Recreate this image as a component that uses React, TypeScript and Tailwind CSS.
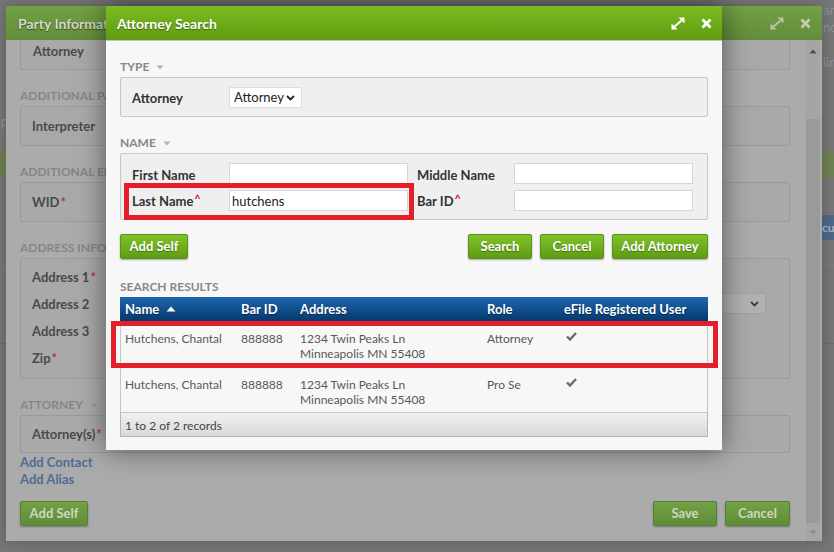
import React from "react";

const ExpandIcon = ({ color }: { color: string }) => (
  <svg width="14" height="13" viewBox="0 0 14 13">
    <path d="M3.5 9.5L10.5 3.5" stroke={color} strokeWidth="2" />
    <path d="M7.5 0.5H13.5V6.5Z" fill={color} />
    <path d="M0.5 6.5V12.5H6.5Z" fill={color} />
  </svg>
);

const CloseIcon = ({ color }: { color: string }) => (
  <svg width="11" height="11" viewBox="0 0 11 11">
    <path d="M1.5 1.5L9.5 9.5M9.5 1.5L1.5 9.5" stroke={color} strokeWidth="2.8" />
  </svg>
);

const DownTri = ({ color }: { color: string }) => (
  <svg width="8" height="5" viewBox="0 0 8 5">
    <path d="M0.5 0.5H7.5L4 4.5Z" fill={color} />
  </svg>
);

const Chevron = ({ color }: { color: string }) => (
  <svg width="9" height="6" viewBox="0 0 9 6">
    <path d="M1 1L4.5 4.5L8 1" stroke={color} strokeWidth="1.8" fill="none" />
  </svg>
);

const Check = () => (
  <svg width="11" height="9" viewBox="0 0 11 9">
    <path d="M1 4.5L4 7.5L10 1" stroke="#6a6a6a" strokeWidth="2.4" fill="none" />
  </svg>
);

const GreenBtn = ({ children, w }: { children: React.ReactNode; w: string }) => (
  <button
    className={`${w} h-[25px] rounded-[2px] border border-[#5a9317] bg-[linear-gradient(to_bottom,#80c228,#5e9c14)] text-white font-bold text-[13px] leading-none [text-shadow:0_1px_1px_rgba(0,0,0,0.35)] shadow-[0_1px_2px_rgba(0,0,0,0.35)]`}
  >
    {children}
  </button>
);

const DimBtn = ({ children, w }: { children: React.ReactNode; w: string }) => (
  <button
    className={`${w} h-[25px] rounded-[2px] border border-[#5a7f37] bg-[linear-gradient(to_bottom,#72a146,#5f8d38)] text-[#cdd6c2] font-bold text-[13px] leading-none shadow-[0_1px_2px_rgba(0,0,0,0.3)]`}
  >
    {children}
  </button>
);

const Caret = () => (
  <span className="text-[#e0102a] text-[11px] font-bold relative top-[-3px] ml-[1px]">^</span>
);

const DimStar = () => <span className="text-[#a53d48] ml-[1px]">*</span>;

function PageBehind() {
  return (
    <div className="w-full h-full flex flex-col bg-[#777777]">
      <div className="h-[145px] flex justify-between items-start">
        <div className="w-[6px] overflow-hidden pt-[115px] text-[13px] font-bold text-[#8c8c8c] whitespace-nowrap">
          Fi
        </div>
        <div className="w-[11px] overflow-hidden pt-[2px] text-[13px] leading-[17px] text-[#8a93a3] whitespace-nowrap">
          <div>an</div>
          <div>nd</div>
          <div className="mt-[18px]">lim</div>
        </div>
      </div>
      <div className="mt-[7px] h-[26px] bg-[#6f8252]" />
      <div className="h-[37px]" />
      <div className="h-[25px] flex justify-end">
        <div className="w-[12px] overflow-hidden bg-[#4e6a8a] text-[12px] font-bold text-[#a9b6c6] leading-[25px] whitespace-nowrap">
          cu
        </div>
      </div>
      <div className="mt-[25px] h-px bg-[#7f7f7f]" />
      <div className="mt-[77px] h-px bg-[#6d6d6d]" />
    </div>
  );
}

function PartyDialog() {
  const box = "border border-[#9a9a9a] bg-[#a9a9a9] rounded-[2px] pl-[11px]";
  const label = "text-[13px] font-bold text-[#4a4a4a] pt-[2px]";
  const head = "mt-[18px] mb-[2px] h-[16px] leading-[16px] text-[12px] font-bold text-[#868686] uppercase whitespace-nowrap flex items-center gap-[7px]";
  return (
    <div className="absolute left-[6px] top-[6px] w-[816px] h-[535px] bg-[#ababab] flex flex-col shadow-[0_0_14px_rgba(0,0,0,0.25)]">
      <div className="h-[34px] shrink-0 flex items-center pl-[12px] pr-[11px] bg-[linear-gradient(to_bottom,#72a045,#648d3a)]">
        <span className="font-bold text-[14px] text-[#d4dac8] [text-shadow:0_1px_1px_rgba(0,0,0,0.5)]">
          Party Information
        </span>
        <div className="ml-auto flex items-center gap-[16px]">
          <ExpandIcon color="#bac5ad" />
          <CloseIcon color="#c3cbb8" />
        </div>
      </div>
      <div className="flex-1 flex min-h-0">
        <div className="flex-1 overflow-hidden pl-[14px] pr-[16px] flex flex-col">
          <div className="h-[30px] shrink-0 border-x border-b border-[#9a9a9a] bg-[#a9a9a9] pl-[12px]">
            <div className={`${label} leading-[18px]`}>Attorney</div>
          </div>
          <div className={head}>Additional Party Information</div>
          <div className={`${box} h-[40px] shrink-0 flex items-center`}>
            <span className={label}>Interpreter</span>
          </div>
          <div className={head}>Additional Employer Information</div>
          <div className={`${box} h-[40px] shrink-0 flex items-center`}>
            <span className={label}>
              WID<DimStar />
            </span>
          </div>
          <div className={head}>Address Information</div>
          <div className={`${box} h-[121px] shrink-0 pt-[4px] flex flex-col`}>
            <div className="h-[27px] flex items-center">
              <span className={label}>
                Address 1<DimStar />
              </span>
            </div>
            <div className="h-[27px] flex items-center">
              <span className={label}>Address 2</span>
              <div className="ml-auto mr-[23px] w-[206px] h-[21px] border border-[#a3a3a3] bg-[#b2b2b2] flex items-center justify-end pr-[6px]">
                <Chevron color="#3e3e3e" />
              </div>
            </div>
            <div className="h-[27px] flex items-center">
              <span className={label}>Address 3</span>
            </div>
            <div className="h-[27px] flex items-center">
              <span className={label}>
                Zip<DimStar />
              </span>
            </div>
          </div>
          <div className={head}>
            Attorney
            <DownTri color="#9a9a9a" />
          </div>
          <div className={`${box} h-[38px] shrink-0 flex items-center`}>
            <span className={label}>
              Attorney(s)<DimStar />
            </span>
          </div>
          <div className="mt-[1px] text-[13px] font-bold text-[#4f6c93] leading-[17px]">Add Contact</div>
          <div className="text-[13px] font-bold text-[#4f6c93] leading-[17px]">Add Alias</div>
          <div className="mt-[13px] flex items-center">
            <DimBtn w="w-[68px]">Add Self</DimBtn>
            <div className="ml-auto flex gap-[8px]">
              <DimBtn w="w-[64px]">Save</DimBtn>
              <DimBtn w="w-[65px]">Cancel</DimBtn>
            </div>
          </div>
        </div>
        <div className="w-[14px] mr-[2px] flex flex-col bg-[#a5a5a5]">
          <div className="h-[22px] shrink-0 flex items-center justify-center">
            <svg width="8" height="5" viewBox="0 0 8 5">
              <path d="M0.5 4.5H7.5L4 0.5Z" fill="#4a4a4a" />
            </svg>
          </div>
          <div className="mt-[57px] flex-1 bg-[#9a9a9a]" />
          <div className="h-[18px] shrink-0 flex items-center justify-center">
            <DownTri color="#8a8a8a" />
          </div>
        </div>
      </div>
    </div>
  );
}

function AttorneyModal() {
  const label = "text-[13px] font-bold text-[#333333] leading-[16px] pt-[2px]";
  const head = "h-[16px] leading-[16px] text-[12px] font-bold text-[#888888] uppercase flex items-center gap-[7px]";
  const input = "w-[179px] h-[21px] bg-white border border-[#d6d6d6] px-[2px] pt-[1px] text-[13px] text-[#222] leading-[18px]";
  const cols = "grid grid-cols-[116px_59px_187px_77px_1fr]";
  const rows = [{ role: "Attorney" }, { role: "Pro Se" }];
  return (
    <div className="absolute left-[106px] top-[6px] w-[616px] h-[444px] bg-[#f7f7f7] shadow-[0_0_26px_rgba(0,0,0,0.5)] flex flex-col">
      <div className="h-[35px] shrink-0 flex items-center pl-[11px] pr-[10px] bg-[linear-gradient(to_bottom,#7bbc1f,#5f9b12)] border-b border-[#c2c2c2]">
        <span className="text-white font-bold text-[14px] [text-shadow:0_1px_1px_rgba(0,0,0,0.4)]">
          Attorney Search
        </span>
        <div className="ml-auto flex items-center gap-[16px]">
          <ExpandIcon color="#ffffff" />
          <CloseIcon color="#ffffff" />
        </div>
      </div>
      <div className="px-[14px] flex flex-col">
        <div className={`${head} mt-[18px]`}>
          Type
          <DownTri color="#b0b0b0" />
        </div>
        <div className="mt-[2px] h-[40px] border border-[#c8c8c8] bg-[#efefef] rounded-[2px] flex items-center pl-[11px]">
          <span className={`${label} w-[97px]`}>Attorney</span>
          <div className="w-[73px] h-[21px] bg-white border border-[#dddddd] flex items-center pl-[4px] pr-[6px] pt-[1px] text-[13px] text-[#222]">
            <span>Attorney</span>
            <span className="ml-auto">
              <Chevron color="#222222" />
            </span>
          </div>
        </div>
        <div className={`${head} mt-[18px]`}>
          Name
          <DownTri color="#b0b0b0" />
        </div>
        <div className="mt-[2px] border border-[#c8c8c8] bg-[#efefef] rounded-[2px] pt-[9px] pb-[8px] pl-[11px] flex flex-col gap-[6px]">
          <div className="flex items-center h-[21px]">
            <span className={`${label} w-[97px]`}>First Name</span>
            <div className={input} />
            <span className={`${label} w-[97px] ml-[9px]`}>Middle Name</span>
            <div className={input} />
          </div>
          <div className="flex items-center h-[21px]">
            <span className={`${label} w-[97px]`}>
              Last Name<Caret />
            </span>
            <div className={input}>hutchens</div>
            <span className={`${label} w-[97px] ml-[9px]`}>
              Bar ID<Caret />
            </span>
            <div className={input} />
          </div>
        </div>
        <div className="mt-[14px] flex items-center">
          <GreenBtn w="w-[68px]">Add Self</GreenBtn>
          <div className="ml-auto flex gap-[8px]">
            <GreenBtn w="w-[64px]">Search</GreenBtn>
            <GreenBtn w="w-[64px]">Cancel</GreenBtn>
            <GreenBtn w="w-[96px]">Add Attorney</GreenBtn>
          </div>
        </div>
        <div className={`${head} mt-[20px]`}>Search Results</div>
        <div className="mt-[2px] flex flex-col">
          <div className="h-[24px] pt-[2px] grid grid-cols-[117px_59px_187px_77px_1fr] items-center bg-[linear-gradient(to_bottom,#1d66ae,#06396c)] text-white font-bold text-[13px] [text-shadow:0_1px_1px_rgba(0,0,0,0.4)]">
            <div className="pl-[5px] flex items-center gap-[7px]">
              Name
              <svg width="10" height="6" viewBox="0 0 10 6" className="mb-[2px]">
                <path d="M0.5 5.5L5 0.5L9.5 5.5Z" fill="#ffffff" />
              </svg>
            </div>
            <div className="pl-[4px]">Bar ID</div>
            <div className="pl-[4px]">Address</div>
            <div className="pl-[4px]">Role</div>
            <div className="pl-[4px] whitespace-nowrap">eFile Registered User</div>
          </div>
          {rows.map((r, i) => (
            <div
              key={i}
              className={`${cols} h-[46px] border-x border-b border-[#c6c6c6] bg-[#f7f7f7] pt-[10px] text-[12px] leading-[15px] text-[#585858]`}
            >
              <div className="pl-[4px]">Hutchens, Chantal</div>
              <div className="pl-[4px]">888888</div>
              <div className="pl-[4px]">
                <div>1234 Twin Peaks Ln</div>
                <div>Minneapolis MN 55408</div>
              </div>
              <div className="pl-[4px]">{r.role}</div>
              <div className="pl-[6px] pt-[1px]">
                <Check />
              </div>
            </div>
          ))}
          <div className="h-[24px] pt-[2px] border-x border-b border-[#b4b4b4] bg-[linear-gradient(to_bottom,#f1f1f1,#d9d9d9)] flex items-center pl-[4px] text-[12px] text-[#444]">
            1 to 2 of 2 records
          </div>
        </div>
      </div>
    </div>
  );
}

export default function App() {
  return (
    <div className="relative w-[834px] h-[552px] overflow-hidden font-['Lato',sans-serif]">
      <PageBehind />
      <PartyDialog />
      <AttorneyModal />
      <div className="absolute left-[124px] top-[183px] w-[290px] h-[37px] border-[5px] border-[#e41e2a]" />
      <div className="absolute left-[111px] top-[321px] w-[607px] h-[47px] border-[5px] border-[#e41e2a]" />
    </div>
  );
}
